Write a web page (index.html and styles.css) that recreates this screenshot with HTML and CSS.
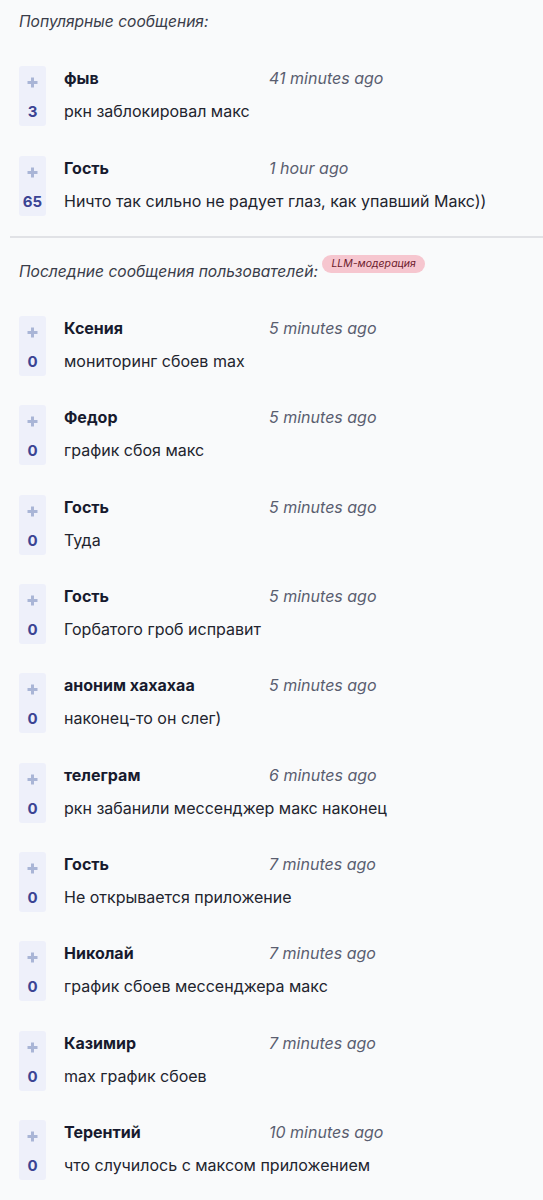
FILE: index.html
```html
<!DOCTYPE html>
<html lang="ru">
<head>
  <meta charset="UTF-8" />
  <meta name="viewport" content="width=device-width, initial-scale=1.0"/>
  <title>Сообщения</title>
  <link rel="stylesheet" href="styles.css">
</head>
<body>
  <section class="block">
    <h3 class="block-title">Популярные сообщения:</h3>
    <div class="list popular" id="popular"></div>
  </section>
  <hr class="divider">
  <section class="block">
    <h3 class="block-title">Последние сообщения пользователей: <span class="badge">LLM-модерация</span></h3>
    <div class="list latest" id="latest"></div>
  </section>

  <script>
    const popular = [
      { name: "фыв", time: "41 minutes ago", text: "ркн заблокировал макс", votes: 3 },
      { name: "Гость", time: "1 hour ago", text: "Ничто так сильно не радует глаз, как упавший Макс))", votes: 65 }
    ];

    const latest = [
      { name: "Ксения", time: "5 minutes ago", text: "мониторинг сбоев max", votes: 0 },
      { name: "Федор", time: "5 minutes ago", text: "график сбоя макс", votes: 0 },
      { name: "Гость", time: "5 minutes ago", text: "Туда", votes: 0 },
      { name: "Гость", time: "5 minutes ago", text: "Горбатого гроб исправит", votes: 0 },
      { name: "аноним хахахаа", time: "5 minutes ago", text: "наконец-то он слег)", votes: 0 },
      { name: "телеграм", time: "6 minutes ago", text: "ркн забанили мессенджер макс наконец", votes: 0 },
      { name: "Гость", time: "7 minutes ago", text: "Не открывается приложение", votes: 0 },
      { name: "Николай", time: "7 minutes ago", text: "график сбоев мессенджера макс", votes: 0 },
      { name: "Казимир", time: "7 minutes ago", text: "max график сбоев", votes: 0 },
      { name: "Терентий", time: "10 minutes ago", text: "что случилось с максом приложением", votes: 0 }
    ];

    function renderList(el, items) {
      el.innerHTML = items.map(m => `
        <div class="comment">
          <div class="vote">
            <svg class="plus" width="11" height="11" viewBox="0 0 11 11">
              <path d="M5.5 0.5v10M0.5 5.5h10" stroke="currentColor" stroke-width="3"/>
            </svg>
            <span class="votes">${m.votes}</span>
          </div>
          <div class="comment-body">
            <div class="comment-head">
              <span class="author">${m.name}</span>
              <span class="time">${m.time}</span>
            </div>
            <div class="comment-text">${m.text}</div>
          </div>
        </div>`).join("");
    }

    renderList(document.getElementById("popular"), popular);
    renderList(document.getElementById("latest"), latest);
  </script>
</body>
</html>
```

FILE: styles.css
```css
* {
  margin: 0;
  padding: 0;
  box-sizing: border-box;
}

body {
  background: #f9fafb;
  color: #1f2230;
  font-family: 'Inter', 'Noto Sans', sans-serif;
  font-size: 16px;
  line-height: 24px;
}

.block {
  padding: 0 0 0 19px;
}

.block-title {
  font-size: 15.6px;
  font-weight: 400;
  font-style: italic;
  color: #3a3d4a;
  line-height: 24px;
  padding-top: 10px;
  margin-bottom: 32px;
}

.badge {
  display: inline-block;
  vertical-align: 10px;
  background: #f6c6cf;
  color: #6d1b2c;
  font-size: 10.5px;
  line-height: 18px;
  padding: 0 9px;
  border-radius: 10px;
  font-style: italic;
}

.list {
  display: flex;
  flex-direction: column;
  gap: 30px;
}

.latest {
  gap: 29.33px;
}

.comment {
  display: flex;
  gap: 18px;
}

.vote {
  width: 27px;
  height: 60px;
  background: #eef0fa;
  border-radius: 3px;
  display: flex;
  flex-direction: column;
  align-items: center;
  padding-top: 11px;
}

.plus {
  color: #a9b5d6;
  display: block;
}

.votes {
  margin-top: 14px;
  font-size: 15px;
  font-weight: 700;
  color: #3b4494;
  line-height: 20px;
}

.comment-head {
  display: grid;
  grid-template-columns: 205px auto;
}

.author {
  font-weight: 700;
  color: #171a2e;
}

.time {
  font-style: italic;
  color: #5a5e70;
}

.comment-text {
  margin-top: 9px;
  color: #22242e;
}

.divider {
  border: none;
  border-top: 2px solid #e1e2e6;
  margin: 20px 0 7px 10px;
}
```
